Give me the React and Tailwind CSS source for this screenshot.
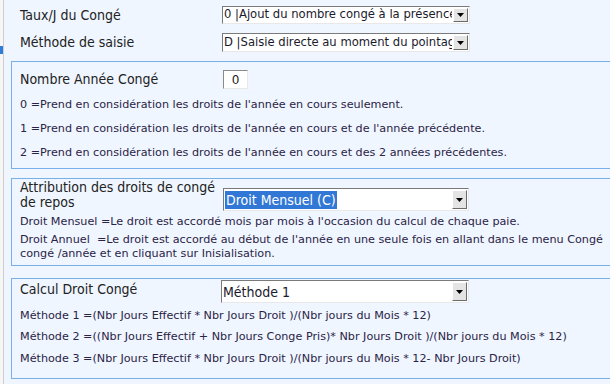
import React from "react";

const FONT = { fontFamily: "Verdana, 'DejaVu Sans', sans-serif" };
const COND = { fontFamily: "'DejaVu Sans Condensed', 'Noto Sans', sans-serif" };

function Arrow() {
	return (
		<div className="flex h-full w-[15px] items-center justify-center border border-t-white border-l-white border-r-[#6b6b6b] border-b-[#6b6b6b] bg-[#e4e4e4]">
			<svg width="7" height="4" viewBox="0 0 7 4">
				<path d="M0 0H7L3.5 4Z" fill="#000" />
			</svg>
		</div>
	);
}

function Select({ value, big, selected, className = "" }) {
	return (
		<div
			className={`flex items-stretch border border-[#7a7a7a] border-r-[#e8e8e8] border-b-[#e8e8e8] bg-white ${className}`}
		>
			<div className="flex flex-1 items-center overflow-hidden whitespace-nowrap pl-[1px]">
				<span
					className={`${big ? "text-[14px]" : "text-[11.6px]"} leading-none ${
						selected ? "bg-[#3178d6] px-[1px] py-[2px] text-white" : "text-[#1a1a2e]"
					}`}
					style={big ? COND : undefined}
				>
					{value}
				</span>
			</div>
			<div className="p-[1px]">
				<Arrow />
			</div>
		</div>
	);
}

function Label({ children, className = "" }) {
	return (
		<span className={`text-[14px] text-[#222] ${className}`} style={COND}>
			{children}
		</span>
	);
}

function Line({ children, className = "" }) {
	return <p className={`text-[11.2px] leading-[14px] text-[#2b2346] ${className}`}>{children}</p>;
}

export default function App() {
	return (
		<div className="flex h-[384px] w-[610px] overflow-hidden bg-[#eff6ff]" style={FONT}>
			{/* left strip */}
			<div className="flex w-[4px] shrink-0 flex-col border-r border-[#cfcfcf] bg-[#f6f6f6]">
				<div className="mt-[46px] h-[8px] w-[3px] bg-[#2f7bd9]" />
			</div>

			<div className="flex flex-1 flex-col">
				{/* top rows */}
				<div className="mt-[6px] flex h-[18px] shrink-0 items-center">
					<Label className="w-[218px] pl-[16px]">Taux/J du Congé</Label>
					<Select className="h-[18px] w-[248px]" value="0 |Ajout du nombre congé à la présence" />
				</div>
				<div className="mt-[9px] flex h-[19px] shrink-0 items-center">
					<Label className="w-[218px] pl-[16px]">Méthode de saisie</Label>
					<Select className="h-[19px] w-[248px]" value="D |Saisie directe au moment du pointage" />
				</div>

				{/* box 1 */}
				<div className="ml-[7px] mt-[9px] h-[108px] w-[620px] shrink-0 border border-[#78b0ea] pl-[8px]">
					<div className="mt-[8px] flex h-[19px] items-center">
						<Label className="w-[203px]">Nombre Année Congé</Label>
						<div className="flex h-[19px] w-[25px] items-center justify-center border border-[#8a8a8a] border-r-[#e8e8e8] border-b-[#e8e8e8] bg-white text-[12px] text-[#222]">
							0
						</div>
					</div>
					<Line className="mt-[9px]">0 =Prend en considération les droits de l'année en cours seulement.</Line>
					<Line className="mt-[10px]">
						1 =Prend en considération les droits de l'année en cours et de l'année précédente.
					</Line>
					<Line className="mt-[10px]">
						2 =Prend en considération les droits de l'année en cours et des 2 années précédentes.
					</Line>
				</div>

				{/* box 2 */}
				<div className="ml-[7px] mt-[9px] h-[88px] w-[620px] shrink-0 border border-[#78b0ea] pl-[8px]">
					<div className="mt-[1px] flex items-start">
						<Label className="w-[203px] pr-[2px] leading-[15px]">Attribution des droits de congé de repos</Label>
						<Select big selected className="mt-[8px] h-[23px] w-[246px]" value="Droit Mensuel (C)" />
					</div>
					<Line className="mt-[4px]">
						Droit Mensuel =Le droit est accordé mois par mois à l'occasion du calcul de chaque paie.
					</Line>
					<Line className="mt-[4px] whitespace-pre">
						{"Droit Annuel  =Le droit est accordé au début de l'année en une seule fois en allant dans le menu Congé"}
						<br />
						congé /année et en cliquant sur Inisialisation.
					</Line>
				</div>

				{/* box 3 */}
				<div className="ml-[7px] mt-[12px] h-[101px] w-[620px] shrink-0 border border-[#78b0ea] pl-[8px]">
					<div className="flex items-start">
						<Label className="mt-[2px] w-[201px] leading-[16px]">Calcul Droit Congé</Label>
						<Select big className="mt-[1px] h-[23px] w-[248px]" value="Méthode 1" />
					</div>
					<Line className="mt-[6px]">Méthode 1 =(Nbr Jours Effectif * Nbr Jours Droit )/(Nbr jours du Mois * 12)</Line>
					<Line className="mt-[7px]">
						Méthode 2 =((Nbr Jours Effectif + Nbr Jours Conge Pris)* Nbr Jours Droit )/(Nbr jours du Mois * 12)
					</Line>
					<Line className="mt-[8px]">
						Méthode 3 =(Nbr Jours Effectif * Nbr Jours Droit )/(Nbr jours du Mois * 12- Nbr Jours Droit)
					</Line>
				</div>
			</div>
		</div>
	);
}
